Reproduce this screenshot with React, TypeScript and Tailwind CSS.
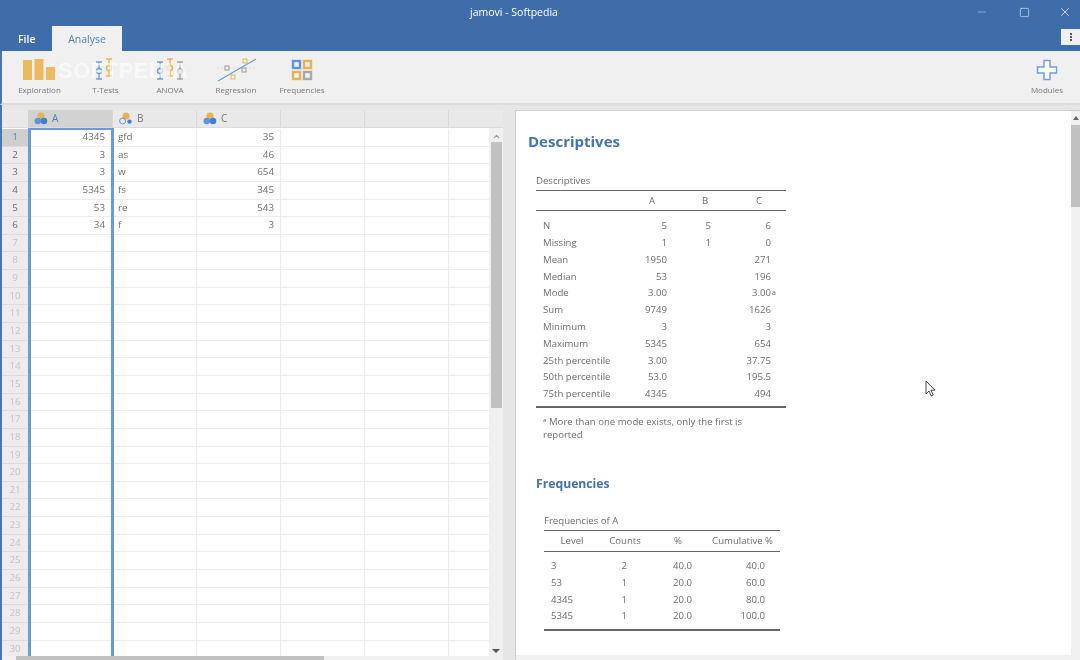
import React from 'react';
import { Minus, Square, X, ChevronUp } from 'lucide-react';

const font = { fontFamily: '"Open Sans", "Noto Sans", sans-serif' };

const rows = [
  ['4345', 'gfd', '35'],
  ['3', 'as', '46'],
  ['3', 'w', '654'],
  ['5345', 'fs', '345'],
  ['53', 're', '543'],
  ['34', 'f', '3'],
];

const desc = [
  ['N', '5', '5', '6'],
  ['Missing', '1', '1', '0'],
  ['Mean', '1950', '', '271'],
  ['Median', '53', '', '196'],
  ['Mode', '3.00', '', '3.00'],
  ['Sum', '9749', '', '1626'],
  ['Minimum', '3', '', '3'],
  ['Maximum', '5345', '', '654'],
  ['25th percentile', '3.00', '', '37.75'],
  ['50th percentile', '53.0', '', '195.5'],
  ['75th percentile', '4345', '', '494'],
];

const freq = [
  ['3', '2', '40.0', '40.0'],
  ['53', '1', '20.0', '60.0'],
  ['4345', '1', '20.0', '80.0'],
  ['5345', '1', '20.0', '100.0'],
];

const Whisker = ({ x, y, h, c, cy }: { x: number; y: number; h: number; c: string; cy: number }) => (
  <g stroke={c} strokeWidth="1.4" fill="none">
    <path d={`M${x - 3} ${y}h6M${x - 3} ${y + h}h6M${x} ${y}V${cy - 2.5}M${x} ${cy + 2.5}V${y + h}`} />
    <circle cx={x} cy={cy} r="2.5" />
  </g>
);

const ToolBtn = ({ w, label, children }: { w: string; label: string; children: React.ReactNode }) => (
  <div className={`flex flex-col items-center ${w}`}>
    <div className="h-[26px] flex items-center justify-center">{children}</div>
    <div className="mt-[1px] text-[8px] leading-[12px] text-[#777]">{label}</div>
  </div>
);

const VarIcon = ({ text }: { text?: boolean }) => (
  <svg width="15" height="13" viewBox="0 0 15 13" className="shrink-0">
    <circle cx="7" cy="4" r="3.6" fill="#e8b252" />
    {text ? (
      <>
        <circle cx="3.6" cy="9" r="3" fill="none" stroke="#5f95dc" strokeWidth="1" />
        <circle cx="10.5" cy="9.6" r="2.2" fill="#3f7fd6" />
      </>
    ) : (
      <>
        <circle cx="3.8" cy="9" r="3.3" fill="#5f95dc" />
        <circle cx="10" cy="9" r="3.3" fill="#3f7fd6" />
      </>
    )}
  </svg>
);

const HeadCell = ({ name, w, active, text }: { name: string; w: string; active?: boolean; text?: boolean }) => (
  <div className={`${w} h-full flex items-center gap-[3px] pl-[6px] border-r border-[#d8d8d8] ${active ? 'bg-[#d2d2d2] text-[#4f7fb8]' : 'text-[#777]'}`}>
    <VarIcon text={text} />
    <span className="text-[10px]">{name}</span>
  </div>
);

const Grid = () => (
  <div className="flex-1 relative min-h-0 overflow-hidden pt-[1px]">
    {Array.from({ length: 30 }).map((_, i) => {
      const r = rows[i];
      return (
        <div key={i} className="flex h-[17.65px] text-[9.8px] text-[#6e6e6e]">
          <div className={`w-[26px] shrink-0 flex items-center justify-center border-b border-[#dcdcdc] ${i === 0 ? 'bg-[#cfcfcf] text-[#4f7fb8]' : 'bg-[#ececec]'} ${i < 6 ? '' : 'text-[#c4c4c4]'}`}>
            {i + 1}
          </div>
          <div className="w-[86px] shrink-0 flex border-x-[3px] border-[#6b9ad6]">
            <div className="flex-1 flex items-center justify-end pr-[6px] border-b border-[#ececec]">{r?.[0]}</div>
          </div>
          <div className="w-[83px] shrink-0 flex items-center pl-[4px] border-r border-b border-[#ececec]">{r?.[1]}</div>
          <div className="w-[84px] shrink-0 flex items-center justify-end pr-[6px] border-r border-b border-[#ececec]">{r?.[2]}</div>
          <div className="w-[84px] shrink-0 border-r border-b border-[#ececec]" />
          <div className="w-[84px] shrink-0 border-r border-b border-[#ececec]" />
          <div className="flex-1 border-b border-[#ececec]" />
        </div>
      );
    })}
    <div className="absolute left-[26px] top-0 w-[86px] h-[2px] bg-[#6b9ad6]" />
  </div>
);

const Scrollbar = () => (
  <div className="w-[14px] shrink-0 bg-[#f0f0f0] flex flex-col items-center">
    <ChevronUp size={9} strokeWidth={3} className="mt-[4px] text-[#999]" />
    <div className="mt-[1px] w-[11px] h-[266px] bg-[#c1c1c1]" />
    <div className="flex-1" />
    <div className="mb-[3px] w-0 h-0 border-x-[4px] border-x-transparent border-t-[4px] border-t-[#555]" />
  </div>
);

const App: React.FC = () => {
  return (
    <div className="w-[1080px] h-[660px] overflow-hidden relative flex flex-col bg-[#e6e6e6] blur-[0.5px]" style={font}>
      {/* title + tabs */}
      <div className="h-[51px] shrink-0 bg-[#3f6da9] flex flex-col text-white">
        <div className="h-[26px] flex items-center relative">
          <div className="flex-1 text-center text-[10.5px] pr-[52px]">jamovi - Softpedia</div>
          <div className="absolute right-0 top-0 h-[24px] flex items-center">
            <div className="w-[42px] flex justify-center"><Minus size={12} strokeWidth={1.2} className="text-white/70" /></div>
            <div className="w-[42px] flex justify-center"><Square size={11} strokeWidth={1.2} /></div>
            <div className="w-[30px] ml-[5px] flex justify-center"><X size={14} strokeWidth={1.2} /></div>
          </div>
        </div>
        <div className="flex-1 flex items-stretch">
          <div className="w-[52px] pl-[18px] pt-[6px] text-[10.5px] font-semibold">File</div>
          <div className="w-[70px] bg-[#f0f0f0] text-[#4f7fb8] text-[10.5px] text-center pt-[6px]">Analyse</div>
          <div className="flex-1" />
          <div className="w-[19px] h-[16px] mt-[3px] bg-[#f0f0f0] flex flex-col items-center justify-center gap-[1px]">
            <span className="w-[2px] h-[2px] bg-[#555]" />
            <span className="w-[2px] h-[2px] bg-[#555]" />
            <span className="w-[2px] h-[2px] bg-[#555]" />
          </div>
        </div>
      </div>

      {/* toolbar */}
      <div className="h-[54px] shrink-0 bg-[#f0f0f0] border-b-2 border-b-[#dcdcdc] border-l-2 border-l-[#4a76b0] flex items-start pt-[6px] pl-[11px] relative">
        <ToolBtn w="w-[53px]" label="Exploration">
          <svg width="33" height="22" viewBox="0 0 33 22">
            <rect x="0" y="1" width="9" height="20" fill="#ecb95e" />
            <rect x="11.5" y="0" width="9" height="21" fill="#ecb95e" />
            <rect x="23" y="8" width="9" height="13" fill="#ecb95e" />
          </svg>
        </ToolBtn>
        <ToolBtn w="w-[79px]" label="T-Tests">
          <svg width="28" height="24" viewBox="0 0 28 24">
            <Whisker x={7} y={4} h={17} c="#6f9fe0" cy={13} />
            <Whisker x={17} y={1} h={17} c="#e8b252" cy={10} />
          </svg>
        </ToolBtn>
        <ToolBtn w="w-[50px]" label="ANOVA">
          <svg width="38" height="24" viewBox="0 0 38 24">
            <Whisker x={9} y={4} h={17} c="#6f9fe0" cy={13} />
            <Whisker x={19} y={1} h={17} c="#e8b252" cy={10} />
            <Whisker x={29} y={4} h={17} c="#a5a5a5" cy={13} />
          </svg>
        </ToolBtn>
        <ToolBtn w="w-[72px] ml-[5px]" label="Regression">
          <svg width="44" height="24" viewBox="0 0 44 24">
            <path d="M3 10h40" stroke="#d4d4d4" strokeWidth="0.8" strokeDasharray="2 2" />
            <path d="M4 23L42 1" stroke="#6f9fe0" strokeWidth="1.4" />
            <rect x="11" y="8" width="4" height="4" fill="#f0f0f0" stroke="#999" />
            <rect x="17" y="17" width="4" height="4" fill="#f0f0f0" stroke="#e8b252" />
            <rect x="28" y="10" width="4" height="4" fill="#f0f0f0" stroke="#999" />
            <rect x="29" y="1" width="4" height="4" fill="#f0f0f0" stroke="#e8b252" />
          </svg>
        </ToolBtn>
        <ToolBtn w="w-[60px]" label="Frequencies">
          <svg width="22" height="22" viewBox="0 0 22 22" fill="none" strokeWidth="2.4">
            <rect x="2" y="2" width="7" height="7" stroke="#5f95dc" />
            <rect x="13" y="2" width="7" height="7" stroke="#e8b252" />
            <rect x="2" y="13" width="7" height="7" stroke="#e8b252" />
            <rect x="13" y="13" width="7" height="7" stroke="#a8a8a8" />
          </svg>
        </ToolBtn>
        <div className="flex-1" />
        <div className="mr-[16px]">
          <ToolBtn w="w-[34px]" label="Modules">
            <svg width="22" height="22" viewBox="0 0 22 22">
              <path d="M8 1.5h6v6.5h6.5v6H14v6.5H8V14H1.5V8H8z" fill="#fff" stroke="#6f9fe0" strokeWidth="1.5" />
            </svg>
          </ToolBtn>
        </div>
        <span className="absolute left-[56px] top-[9px] text-[22px] leading-[22px] font-bold tracking-[0.5px] text-white/60 font-['Liberation_Sans',sans-serif]">SOFTPEDIA</span>
      </div>

      {/* panes */}
      <div className="flex-1 min-h-0 flex border-l-2 border-l-[#4a76b0] pt-[5px]">
        <div className="w-[501px] shrink-0 flex flex-col">
          <div className="h-[18px] shrink-0 flex bg-[#e9e9e9] border-b border-[#dcdcdc]">
            <div className="w-[26px] shrink-0" />
            <HeadCell name="A" w="w-[85px]" active />
            <HeadCell name="B" w="w-[84px]" text />
            <HeadCell name="C" w="w-[84px]" />
            <div className="w-[84px] border-r border-[#d8d8d8]" />
            <div className="w-[84px] border-r border-[#d8d8d8]" />
          </div>
          <div className="flex-1 min-h-0 flex">
            <div className="flex-1 min-w-0 bg-white flex flex-col">
              <Grid />
            </div>
            <Scrollbar />
          </div>
          <div className="h-[4px] shrink-0 bg-[#f0f0f0] pl-[14px]">
            <div className="w-[308px] h-full bg-[#c1c1c1]" />
          </div>
        </div>

        <div className="w-[12px] shrink-0" />

        {/* results */}
        <div className="flex-1 flex flex-col bg-white border-t border-l border-[#cfcfcf] text-[#6e6e6e]">
          <div className="flex-1 min-h-0 flex">
            <div className="flex-1 pl-[12px] pt-[19px]">
              <h1 className="text-[15px] leading-[22px] font-bold text-[#4474ad]">Descriptives</h1>
              <div className="ml-[8px] mt-[21px] w-[250px] text-[9.6px]">
                <div className="h-[17px] leading-[16px]">Descriptives</div>
                <div className="flex h-[21px] items-center border-y border-[#666] pt-[1px]">
                  <div className="w-[90px]" />
                  <div className="w-[52px] text-center">A</div>
                  <div className="w-[54px] text-center">B</div>
                  <div className="w-[54px] text-center">C</div>
                </div>
                <div className="pt-[7px] pb-[3px] border-b-2 border-[#666]">
                  {desc.map((d) => (
                    <div key={d[0]} className="flex h-[16.8px] items-center">
                      <div className="w-[90px] pl-[7px]">{d[0]}</div>
                      <div className="w-[41px] text-right">{d[1]}</div>
                      <div className="w-[44px] text-right">{d[2]}</div>
                      <div className="w-[60px] text-right relative">
                        {d[3]}
                        {d[0] === 'Mode' && <sup className="absolute left-full top-[3px] ml-[1px] text-[7px] leading-none">a</sup>}
                      </div>
                    </div>
                  ))}
                </div>
                <p className="mt-[7px] pl-[7px] pr-[20px] leading-[13.5px]">ᵃ More than one mode exists, only the first is reported</p>
              </div>
              <h2 className="ml-[8px] mt-[33px] text-[12.2px] leading-[18px] font-bold text-[#4474ad]">Frequencies</h2>
              <div className="ml-[16px] mt-[20px] w-[236px] text-[9.6px]">
                <div className="h-[17px] leading-[16px]">Frequencies of A</div>
                <div className="flex h-[22px] items-center border-y border-[#666] pt-[1px]">
                  <div className="w-[56px] text-center">Level</div>
                  <div className="w-[50px] text-center">Counts</div>
                  <div className="w-[56px] text-center">%</div>
                  <div className="flex-1 text-right pr-[7px]">Cumulative %</div>
                </div>
                <div className="pt-[6px] pb-[4px] border-b-2 border-[#666]">
                  {freq.map((f) => (
                    <div key={f[0]} className="flex h-[16.8px] items-center">
                      <div className="w-[46px] pl-[7px]">{f[0]}</div>
                      <div className="w-[37px] text-right">{f[1]}</div>
                      <div className="w-[65px] text-right">{f[2]}</div>
                      <div className="w-[73px] text-right">{f[3]}</div>
                    </div>
                  ))}
                </div>
              </div>
            </div>
            <div className="w-[9px] shrink-0 bg-[#f0f0f0] flex flex-col items-center">
              <div className="mt-[5px] w-0 h-0 border-x-[3px] border-x-transparent border-b-[4px] border-b-[#666]" />
              <div className="mt-[5px] w-full h-[82px] bg-[#c1c1c1]" />
            </div>
          </div>
          <div className="h-[5px] shrink-0 bg-[#f0f0f0]" />
        </div>
      </div>

      {/* mouse pointer */}
      <svg width="12" height="18" viewBox="0 0 12 18" className="absolute left-[925px] top-[380px]">
        <path d="M1 1v13l3-3 2.2 5 2-1-2.2-4.8H10z" fill="#fff" stroke="#333" strokeWidth="0.9" />
      </svg>
    </div>
  );
};

export default App;
